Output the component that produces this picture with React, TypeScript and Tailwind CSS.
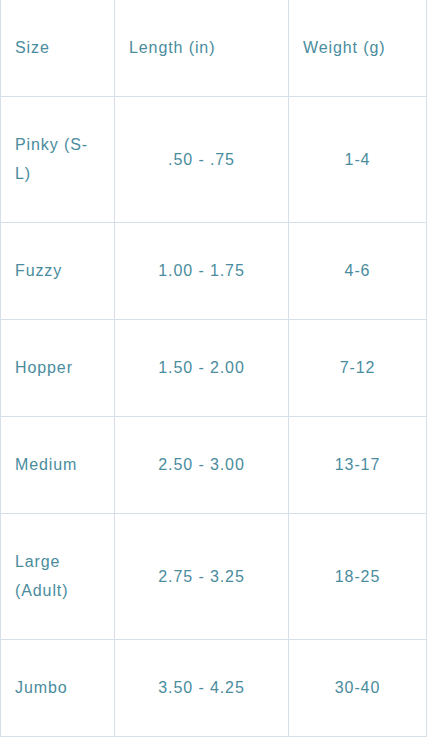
const ROWS: [string, string, string][] = [
  ['Pinky (S-L)', '.50 - .75', '1-4'],
  ['Fuzzy', '1.00 - 1.75', '4-6'],
  ['Hopper', '1.50 - 2.00', '7-12'],
  ['Medium', '2.50 - 3.00', '13-17'],
  ['Large (Adult)', '2.75 - 3.25', '18-25'],
  ['Jumbo', '3.50 - 4.25', '30-40'],
];

const cell = 'border border-[#d7dfe8] px-[14px] pt-[33px] pb-[34px] align-middle font-normal';

export default function App() {
  return (
    <div className="min-h-screen bg-white">
      <table
        className="w-[426px] border-collapse table-fixed text-[16px] leading-[29px] tracking-[0.9px] text-[#4a8c9d]"
        style={{ fontFamily: '"Liberation Sans", Arial, sans-serif' }}
      >
        <colgroup>
          <col className="w-[114px]" />
          <col className="w-[174px]" />
          <col className="w-[138px]" />
        </colgroup>
        <thead>
          <tr>
            <th className={`${cell} border-t-0 text-left`}>Size</th>
            <th className={`${cell} border-t-0 text-left`}>Length (in)</th>
            <th className={`${cell} border-t-0 text-left`}>Weight (g)</th>
          </tr>
        </thead>
        <tbody>
          {ROWS.map(([size, len, weight]) => (
            <tr key={size}>
              <td className={`${cell} text-left`}>{size}</td>
              <td className={`${cell} text-center`}>{len}</td>
              <td className={`${cell} text-center`}>{weight}</td>
            </tr>
          ))}
        </tbody>
      </table>
    </div>
  );
}
